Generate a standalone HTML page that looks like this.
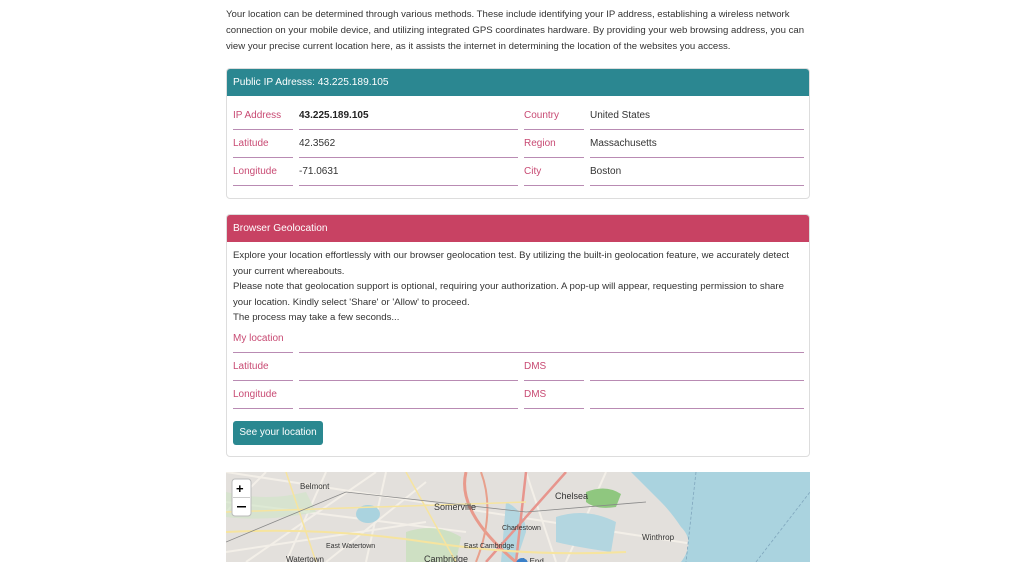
<!DOCTYPE html>
<html><head><meta charset="utf-8"><style>
*{margin:0;padding:0;box-sizing:border-box}
body{width:1024px;height:562px;overflow:hidden;background:#fff;font-family:"Liberation Sans",Arial,sans-serif;font-size:10px;color:#333;position:relative}
.abs{position:absolute}
.intro{left:226px;top:7px;width:586px;line-height:15.8px;font-size:9.6px;color:#333}
.card{position:absolute;left:226px;width:584px;border:1px solid #ddd;border-radius:4px;overflow:hidden}
.hd{height:27px;line-height:27px;color:#fff;padding-left:6px;font-size:10.2px}
.lab{position:absolute;color:#c84a73;font-size:10px}
.val{position:absolute;color:#333;font-size:10px}
.ln{position:absolute;height:1px;background:#b98bb3}
.btn{position:absolute;left:233px;top:421px;width:90px;height:24px;background:#2a8890;border-radius:3px;color:#fff;font-size:10px;line-height:24px;text-align:center}
.map{left:226px;top:472px;width:584px;height:90px;overflow:hidden;background:#eee}
</style></head><body>
<div class="abs intro">Your location can be determined through various methods. These include identifying your IP address, establishing a wireless network connection on your mobile device, and utilizing integrated GPS coordinates hardware. By providing your web browsing address, you can view your precise current location here, as it assists the internet in determining the location of the websites you access.</div>

<div class="card" style="top:68px;height:131px"><div class="hd" style="background:#2b8791">Public IP Adresss: 43.225.189.105</div></div>
<div class="lab" style="left:233px;top:110px">IP Address</div>
<div class="val" style="left:299px;top:110px;font-weight:bold;color:#222">43.225.189.105</div>
<div class="lab" style="left:524px;top:110px">Country</div>
<div class="val" style="left:590px;top:110px">United States</div>
<div class="lab" style="left:233px;top:138px">Latitude</div>
<div class="val" style="left:299px;top:138px">42.3562</div>
<div class="lab" style="left:524px;top:138px">Region</div>
<div class="val" style="left:590px;top:138px">Massachusetts</div>
<div class="lab" style="left:233px;top:166px">Longitude</div>
<div class="val" style="left:299px;top:166px">-71.0631</div>
<div class="lab" style="left:524px;top:166px">City</div>
<div class="val" style="left:590px;top:166px">Boston</div>
<div class="ln" style="left:233px;top:129px;width:60px"></div><div class="ln" style="left:299px;top:129px;width:219px"></div><div class="ln" style="left:524px;top:129px;width:60px"></div><div class="ln" style="left:590px;top:129px;width:214px"></div>
<div class="ln" style="left:233px;top:157px;width:60px"></div><div class="ln" style="left:299px;top:157px;width:219px"></div><div class="ln" style="left:524px;top:157px;width:60px"></div><div class="ln" style="left:590px;top:157px;width:214px"></div>
<div class="ln" style="left:233px;top:185px;width:60px"></div><div class="ln" style="left:299px;top:185px;width:219px"></div><div class="ln" style="left:524px;top:185px;width:60px"></div><div class="ln" style="left:590px;top:185px;width:214px"></div>

<div class="card" style="top:214px;height:243px"><div class="hd" style="background:#c84263">Browser Geolocation</div></div>
<div class="abs" style="left:233px;top:248px;width:566px;line-height:15.5px;font-size:9.6px;color:#333">Explore your location effortlessly with our browser geolocation test. By utilizing the built-in geolocation feature, we accurately detect your current whereabouts.<br>Please note that geolocation support is optional, requiring your authorization. A pop-up will appear, requesting permission to share your location. Kindly select 'Share' or 'Allow' to proceed.<br>The process may take a few seconds...</div>
<div class="lab" style="left:233px;top:333px">My location</div>
<div class="ln" style="left:233px;top:352px;width:60px"></div><div class="ln" style="left:299px;top:352px;width:505px"></div>
<div class="lab" style="left:233px;top:361px">Latitude</div>
<div class="lab" style="left:524px;top:361px">DMS</div>
<div class="ln" style="left:233px;top:380px;width:60px"></div><div class="ln" style="left:299px;top:380px;width:219px"></div><div class="ln" style="left:524px;top:380px;width:60px"></div><div class="ln" style="left:590px;top:380px;width:214px"></div>
<div class="lab" style="left:233px;top:389px">Longitude</div>
<div class="lab" style="left:524px;top:389px">DMS</div>
<div class="ln" style="left:233px;top:408px;width:60px"></div><div class="ln" style="left:299px;top:408px;width:219px"></div><div class="ln" style="left:524px;top:408px;width:60px"></div><div class="ln" style="left:590px;top:408px;width:214px"></div>
<div class="btn">See your location</div>

<div class="abs map">
<svg width="584" height="90" xmlns="http://www.w3.org/2000/svg" font-family="Liberation Sans, sans-serif" font-size="8" fill="#333">
<rect width="584" height="90" fill="#e3e0dc"/>
<path d="M0 0 L584 90 M40 0 L0 40 M100 0 L60 90 M160 0 L140 90 M200 10 L100 90 M300 0 L330 90 M0 30 L240 60 M0 80 L200 50 M20 90 L150 0 M380 0 L340 90" stroke="#f3efe8" stroke-width="2" fill="none"/>
<path d="M405 0 H584 V90 H455 Q470 70 455 55 Q445 40 435 30 Q420 15 405 0 Z" fill="#aad3df"/>
<path d="M330 45 Q360 35 390 50 L385 80 Q350 75 330 70 Z" fill="#b3d6e0"/>
<path d="M280 30 Q300 40 300 60 L290 90 H275 Z" fill="#b3d6e0"/>
<path d="M360 20 Q380 12 395 22 L390 35 Q370 38 360 30Z" fill="#8fc77f"/>
<ellipse cx="142" cy="42" rx="12" ry="9" fill="#aad3df"/>
<path d="M0 20 Q40 30 80 20 L90 40 Q40 50 0 45Z" fill="#cfe5c6" opacity=".6"/>
<path d="M180 60 Q210 50 235 65 L230 90 H180Z" fill="#c4dfb8" opacity=".7"/>
<path d="M240 0 Q230 40 290 90" stroke="#e89a8c" stroke-width="3" fill="none"/>
<path d="M255 0 Q270 40 250 90" stroke="#e8a08c" stroke-width="2" fill="none"/>
<path d="M340 0 L260 90 M300 0 L290 90" stroke="#e7958d" stroke-width="2.5" fill="none"/>
<path d="M0 60 Q100 55 200 70 T400 80" stroke="#f6e49f" stroke-width="2" fill="none"/>
<path d="M0 40 L300 30 M60 0 L90 90 M180 0 L230 90" stroke="#f6e49f" stroke-width="1.5" fill="none"/>
<path d="M0 70 L120 20 L300 40 L420 30" stroke="#888" stroke-width=".8" fill="none"/>
<path d="M470 0 L460 90 M530 90 L584 20" stroke="#7fa6bd" stroke-width=".8" stroke-dasharray="3 2" fill="none"/>
<text x="74" y="17">Belmont</text>
<text x="208" y="38" font-size="9">Somerville</text>
<text x="329" y="27" font-size="9">Chelsea</text>
<text x="100" y="76" font-size="7">East Watertown</text>
<text x="238" y="76" font-size="7">East Cambridge</text>
<text x="276" y="58" font-size="7">Charlestown</text>
<text x="416" y="68" font-size="8">Winthrop</text>
<text x="60" y="90" font-size="8">Watertown</text>
<text x="198" y="90" font-size="9">Cambridge</text>
<text x="292" y="92" font-size="8">rth End</text>
<circle cx="296" cy="92" r="6" fill="#3a80c9"/>
<rect x="6" y="7" width="19" height="37" rx="3" fill="#fff" stroke="#bbb"/>
<line x1="7" y1="25.5" x2="24" y2="25.5" stroke="#ccc"/>
<text x="10" y="21" font-size="13" font-weight="bold" fill="#000">+</text>
<rect x="11" y="34" width="9" height="1.5" fill="#000"/>
</svg>
</div>
</body></html>
